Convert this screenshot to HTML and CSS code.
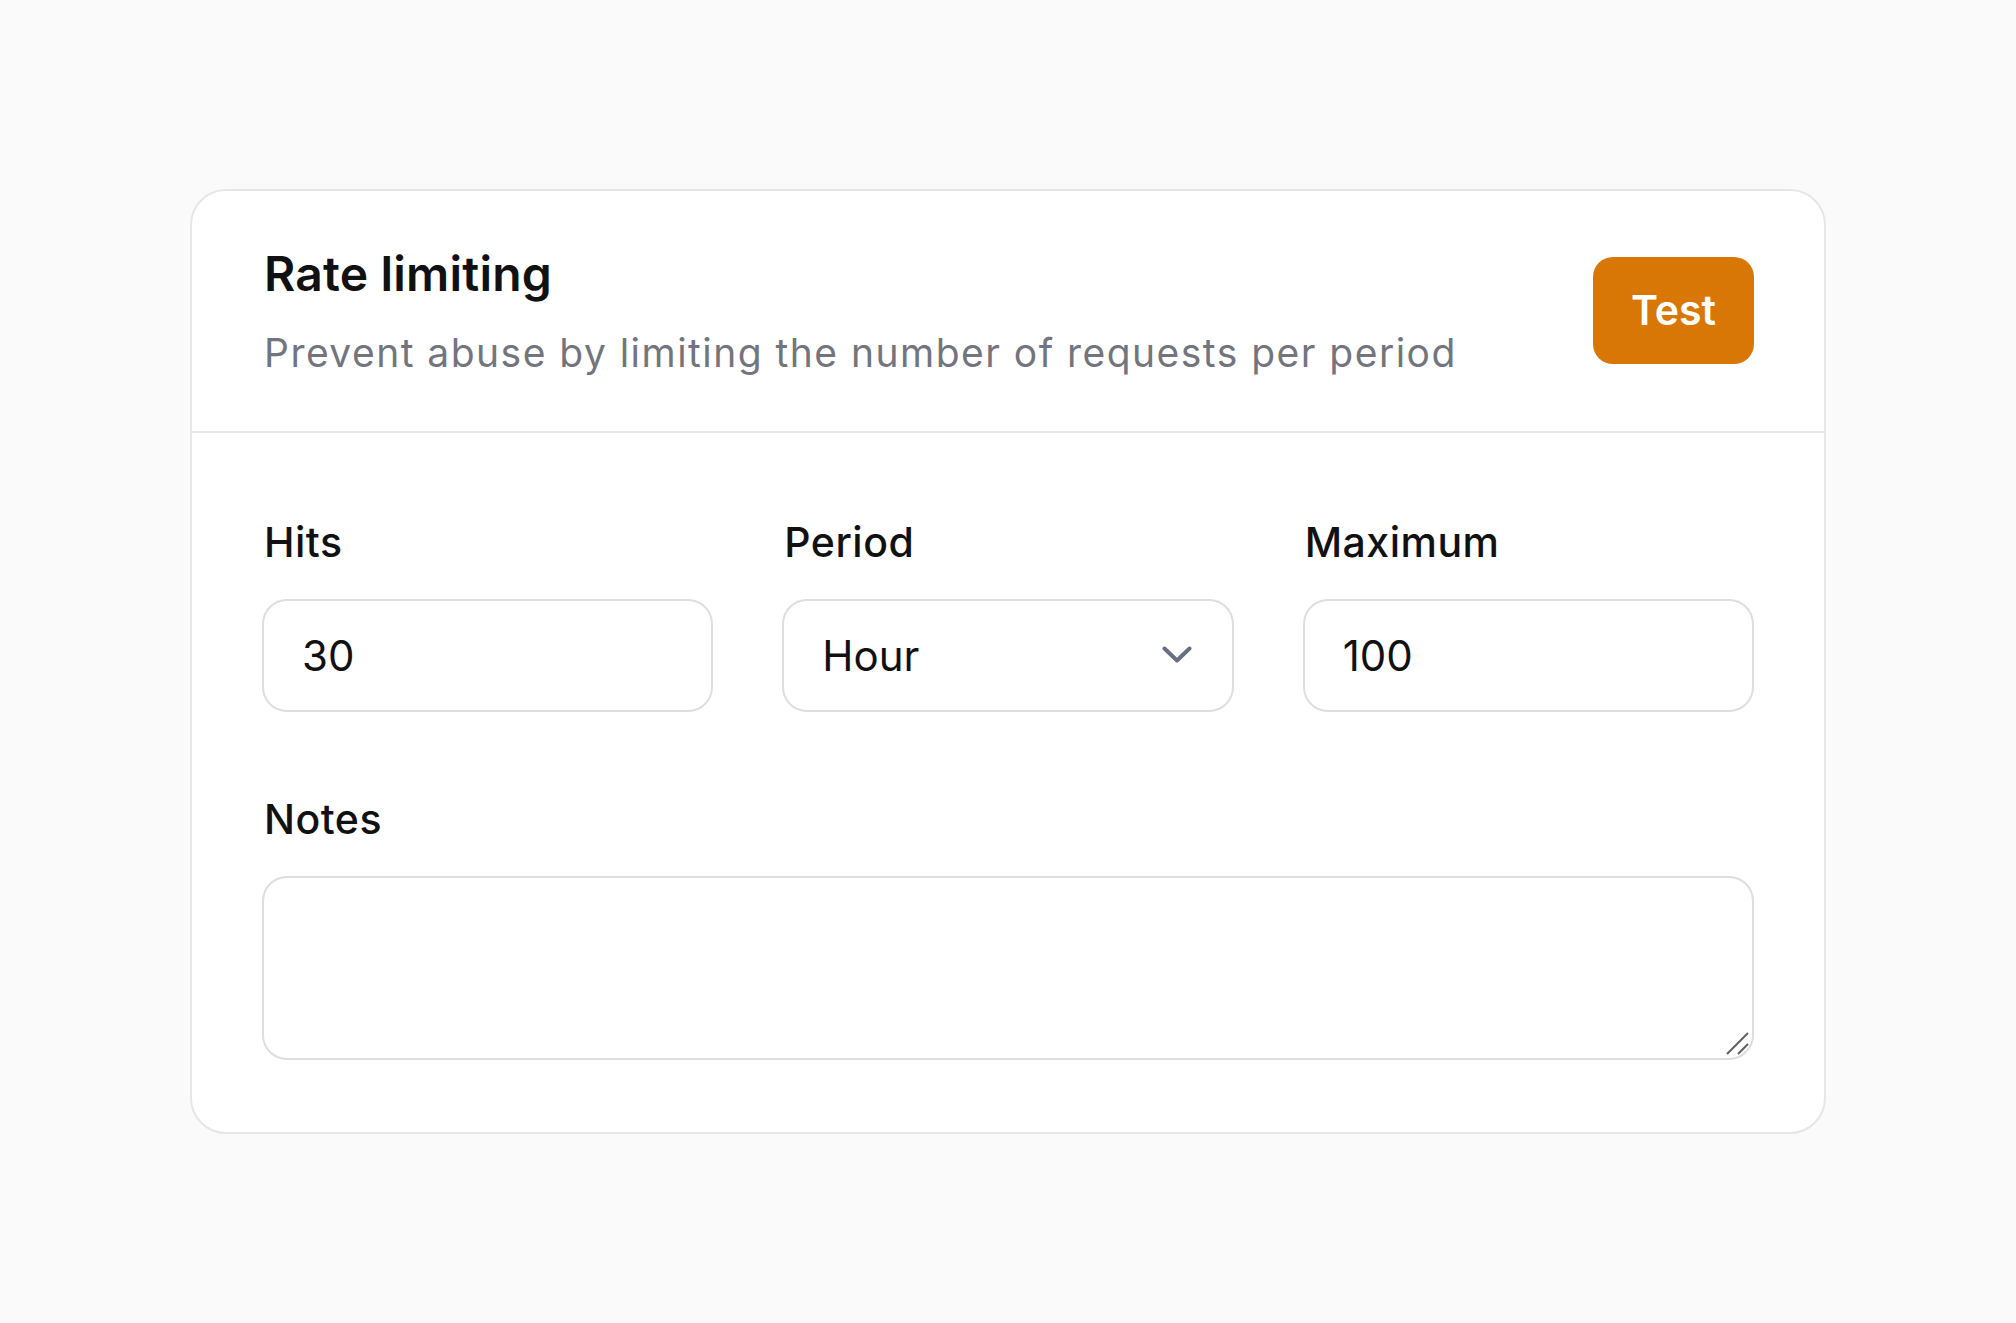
FILE: index.html
```html
<!DOCTYPE html>
<html lang="en">
<head>
<meta charset="utf-8">
<title>Rate limiting</title>
<link rel="stylesheet" href="styles.css">
</head>
<body>
<main class="page">
  <section class="card">
    <header class="card-header">
      <div class="card-heading">
        <h1 class="card-title">Rate limiting</h1>
        <p class="card-subtitle">Prevent abuse by limiting the number of requests per period</p>
      </div>
      <button class="btn-primary" type="button">Test</button>
    </header>
    <div class="card-body">
      <div class="field-row">
        <label class="field">
          <span class="field-label">Hits</span>
          <input class="control" type="text" value="30">
        </label>
        <label class="field">
          <span class="field-label">Period</span>
          <span class="select-wrap">
            <select class="control select">
              <option>Hour</option>
              <option>Minute</option>
              <option>Day</option>
            </select>
            <svg class="chevron" width="30" height="17" viewBox="0 0 30 17" aria-hidden="true"><polyline points="2.5,2.5 15,14.5 27.5,2.5" fill="none" stroke="#667080" stroke-width="4" stroke-linecap="round" stroke-linejoin="round"/></svg>
          </span>
        </label>
        <label class="field">
          <span class="field-label">Maximum</span>
          <input class="control" type="text" value="100">
        </label>
      </div>
      <label class="field notes">
        <span class="field-label">Notes</span>
        <span class="textarea-wrap">
          <textarea class="control textarea"></textarea>
          <svg class="grip" width="26" height="26" viewBox="0 0 26 26" aria-hidden="true">
            <line x1="3" y1="24" x2="24" y2="3" stroke="#5f5f5f" stroke-width="2"/>
            <line x1="14" y1="24" x2="24" y2="14" stroke="#5f5f5f" stroke-width="2"/>
          </svg>
        </span>
      </label>
    </div>
  </section>
</main>
</body>
</html>
```

FILE: styles.css
```css
* { box-sizing: border-box; }

html, body {
  margin: 0;
  padding: 0;
}

body {
  background: #fafafa;
  font-family: Inter, "Noto Sans", "Liberation Sans", sans-serif;
  color: #111111;
}

.page {
  min-height: 100vh;
  display: flex;
  align-items: flex-start;
  justify-content: center;
  padding-top: 189px;
}

.card {
  width: 1636px;
  background: #ffffff;
  border: 2px solid #e6e6e6;
  border-radius: 36px;
}

.card-header {
  display: flex;
  align-items: center;
  justify-content: space-between;
  padding: 54px 70px 55px;
  border-bottom: 2px solid #e6e6e6;
}

.card-heading {
  display: flex;
  flex-direction: column;
  gap: 26px;
  padding-left: 2px;
}

.card-title {
  margin: 0;
  font-size: 48px;
  line-height: 58px;
  font-weight: 600;
  color: #111111;
  letter-spacing: 0.2px;
}

.card-subtitle {
  margin: 0;
  font-size: 39px;
  line-height: 47px;
  font-weight: 400;
  color: #73757e;
  letter-spacing: 1.47px;
}

.btn-primary {
  height: 107px;
  padding: 0 38px;
  border: none;
  border-radius: 20px;
  background: #d97706;
  color: #ffffff;
  font-family: inherit;
  font-size: 41px;
  font-weight: 600;
  line-height: 1;
  cursor: pointer;
}

.card-body {
  padding: 84px 70px 72px;
  display: flex;
  flex-direction: column;
  gap: 82px;
}

.field-row {
  display: grid;
  grid-template-columns: repeat(3, 1fr);
  gap: 69px;
}

.field {
  display: flex;
  flex-direction: column;
  gap: 32px;
}

.field-label {
  font-size: 41px;
  line-height: 50px;
  font-weight: 500;
  color: #111111;
  letter-spacing: 0.5px;
  padding-left: 2px;
}

.control {
  width: 100%;
  height: 113px;
  padding: 0 38px;
  border: 2px solid #dedede;
  border-radius: 25px;
  background: #ffffff;
  font-family: inherit;
  font-size: 42px;
  color: #111111;
  outline: none;
}

.select-wrap,
.textarea-wrap {
  position: relative;
  display: block;
}

.select {
  appearance: none;
  -webkit-appearance: none;
  padding-right: 90px;
}

.chevron {
  position: absolute;
  right: 42px;
  top: 47px;
  pointer-events: none;
}

.notes {
  gap: 32px;
}

.textarea {
  height: 184px;
  padding: 30px 38px;
  resize: none;
  display: block;
}

.grip {
  position: absolute;
  right: 4px;
  bottom: 4px;
  pointer-events: none;
}
```
